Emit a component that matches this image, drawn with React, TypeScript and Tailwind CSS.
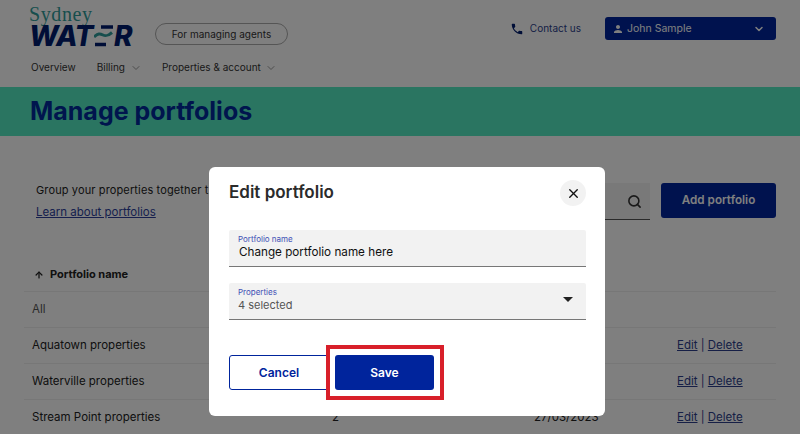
import { ChevronDown, Search, X, ArrowUp } from 'lucide-react';

const rows = [
  { name: 'All', muted: true },
  { name: 'Aquatown properties', count: '4', date: '27/03/2023', actions: true },
  { name: 'Waterville properties', count: '3', date: '27/03/2023', actions: true },
  { name: 'Stream Point properties', count: '2', date: '27/03/2023', actions: true },
];

const Logo = () => (
  <div className="flex flex-col w-[104px] h-[44px]">
    <span className="h-[19px] font-['Liberation_Serif',serif] text-[20px] leading-[19px] tracking-[0.6px] text-[#2f9d9b]">Sydney</span>
    <div className="h-[24px] flex items-center font-['Inter',sans-serif] italic font-extrabold text-[28px] leading-[24px] text-[#001d6e]">
      <span className="tracking-[-0.5px]">WAT</span>
      <svg width="20" height="22" viewBox="0 0 20 22" className="shrink-0 ml-[1px]">
        <path d="M7 2h12" stroke="#001d6e" strokeWidth="3.500" />
        <path d="M0 12c4-4 6-3.500 9-2s5 1 9-2.500" stroke="#2f9d9b" strokeWidth="3" fill="none" />
        <path d="M1 19.500h11" stroke="#001d6e" strokeWidth="3.500" />
      </svg>
      <span>R</span>
    </div>
  </div>
);

export default function App() {
  return (
    <div className="relative w-[800px] h-[434px] overflow-hidden bg-white font-['Inter',sans-serif] text-[#222]">
      {/* Header */}
      <header className="h-[87px] flex flex-col">
        <div className="flex items-start pl-[29px] pr-[24px] pt-[5px] h-[60px]">
          <Logo />
          <span className="ml-[22px] mt-[18px] w-[133px] h-[22px] rounded-full border border-[#aaa] flex items-center justify-center text-[10px] text-[#333]">
            For managing agents
          </span>
          <div className="ml-auto mt-[12px] flex items-center">
            <svg width="14" height="14" viewBox="0 0 24 24" fill="#001d6e">
              <path d="M6.620 10.790c1.440 2.830 3.760 5.140 6.590 6.590l2.200-2.200c.270-.270.670-.360 1.020-.240 1.120.370 2.330.570 3.570.570.550 0 1 .450 1 1V20c0 .550-.450 1-1 1-9.390 0-17-7.610-17-17 0-.550.450-1 1-1h3.500c.550 0 1 .450 1 1 0 1.250.200 2.450.570 3.570.110.350.030.740-.250 1.020l-2.200 2.200z" />
            </svg>
            <span className="ml-[6px] text-[10px] text-[#2c3e8c]">Contact us</span>
            <button className="ml-[24px] w-[171px] h-[23px] rounded-[3px] bg-[#00249c] text-white flex items-center pl-[7px] pr-[11px] text-[10.500px]">
              <svg width="12" height="12" viewBox="0 0 24 24" fill="#fff">
                <path d="M12 12c2.210 0 4-1.790 4-4s-1.790-4-4-4-4 1.790-4 4 1.790 4 4 4zm0 2c-2.670 0-8 1.340-8 4v2h16v-2c0-2.660-5.330-4-8-4z" />
              </svg>
              <span className="ml-[3px]">John Sample</span>
              <ChevronDown size={12} strokeWidth={3} className="ml-auto" />
            </button>
          </div>
        </div>
        <nav className="flex items-center pl-[31px] text-[10px] text-[#333]">
          <span>Overview</span>
          <span className="ml-[21px]">Billing</span>
          <ChevronDown size={12} className="ml-[5px] text-[#999]" />
          <span className="ml-[20px]">Properties &amp; account</span>
          <ChevronDown size={12} className="ml-[4px] text-[#999]" />
        </nav>
      </header>

      {/* Title band */}
      <div className="h-[49px] bg-[#54eac2] flex items-center pl-[30px]">
        <h1 className="text-[25px] font-bold text-[#002a9c]">Manage portfolios</h1>
      </div>

      {/* Page content */}
      <main className="px-[24px]">
        <div className="flex items-start pt-[47px] pl-[12px] h-[120px]">
          <div className="text-[11px] w-[173px]">
            <p className="leading-[14px] whitespace-nowrap tracking-[0.13px]">Group your properties together t</p>
            <a className="block mt-[7px] underline text-[#2c3e9c] text-[11.500px] whitespace-nowrap">Learn about portfolios</a>
          </div>
          <div className="ml-auto flex items-start">
            <div className="w-[180px] h-[37px] bg-[#f2f2f2] border-b border-[#555] flex items-center justify-end pr-[8px]">
              <Search size={15} strokeWidth={2.500} className="text-[#333]" />
            </div>
            <button className="ml-[11px] w-[115px] h-[35px] rounded-[3px] bg-[#00249c] text-white text-[11.700px] font-semibold">
              Add portfolio
            </button>
          </div>
        </div>
        <div className="h-[36px] flex items-center pl-[10px] pt-[2px] text-[11px] font-bold border-b border-[#eee]">
          <ArrowUp size={10} strokeWidth={3} />
          <span className="ml-[6px]">Portfolio name</span>
        </div>
        {rows.map((row) => (
          <div key={row.name} className="h-[36px] flex items-center pl-[8px] text-[11.500px] border-b border-[#eee]">
            <span className={`w-[300px] ${row.muted ? 'text-[#555]' : ''}`}>{row.name}</span>
            {row.count && <span className="w-[202px]">{row.count}</span>}
            {row.date && <span className="w-[143px]">{row.date}</span>}
            {row.actions && (
              <span className="text-[#2c3e8c]">
                <a className="underline">Edit</a> | <a className="underline">Delete</a>
              </span>
            )}
          </div>
        ))}
      </main>

      {/* Dim layer and dialog */}
      <div className="absolute inset-0 bg-black/50" />
      <div className="absolute left-[209px] top-[167px] w-[396px] h-[249px] bg-white rounded-[6px] pl-[20px] pr-[19px] pt-[13px]">
        <div className="flex items-center justify-between h-[26px]">
          <h2 className="text-[17px] font-semibold text-[#2b2b2b]">Edit portfolio</h2>
          <button className="w-[26px] h-[26px] rounded-full bg-[#f2f2f2] flex items-center justify-center">
            <X size={15} strokeWidth={2.200} className="text-[#111]" />
          </button>
        </div>
        <div className="mt-[24px] h-[37px] bg-[#f2f2f2] border-b border-[#777] rounded-t-[2px] px-[9px] pt-[4px]">
          <div className="text-[8px] leading-[10px] text-[#3f51b5]">Portfolio name</div>
          <div className="mt-[1px] text-[11.700px] leading-[15px] text-[#111] ml-[1px]">Change portfolio name here</div>
        </div>
        <div className="mt-[16px] h-[37px] bg-[#f2f2f2] border-b border-[#777] rounded-t-[2px] pl-[9px] pr-[13px] pt-[4px] flex justify-between">
          <div>
            <div className="text-[8px] leading-[10px] text-[#3f51b5]">Properties</div>
            <div className="mt-[1px] text-[11px] leading-[14px] text-[#555]">4 selected</div>
          </div>
          <div className="mt-[10px] w-0 h-0 border-x-[5px] border-x-transparent border-t-[5px] border-t-[#222]" />
        </div>
        <div className="mt-[35px] flex gap-[6px]">
          <button className="w-[100px] h-[35px] rounded-[3px] border-[1.500px] border-[#00249c] text-[#00249c] text-[12px] font-semibold">Cancel</button>
          <button className="w-[99px] h-[35px] rounded-[3px] bg-[#00249c] text-white text-[12px] font-semibold">Save</button>
        </div>
      </div>

      {/* Red callout */}
      <div className="absolute left-[326px] top-[345px] w-[118px] h-[55px] border-4 border-[#d81f2a]" />
    </div>
  );
}
